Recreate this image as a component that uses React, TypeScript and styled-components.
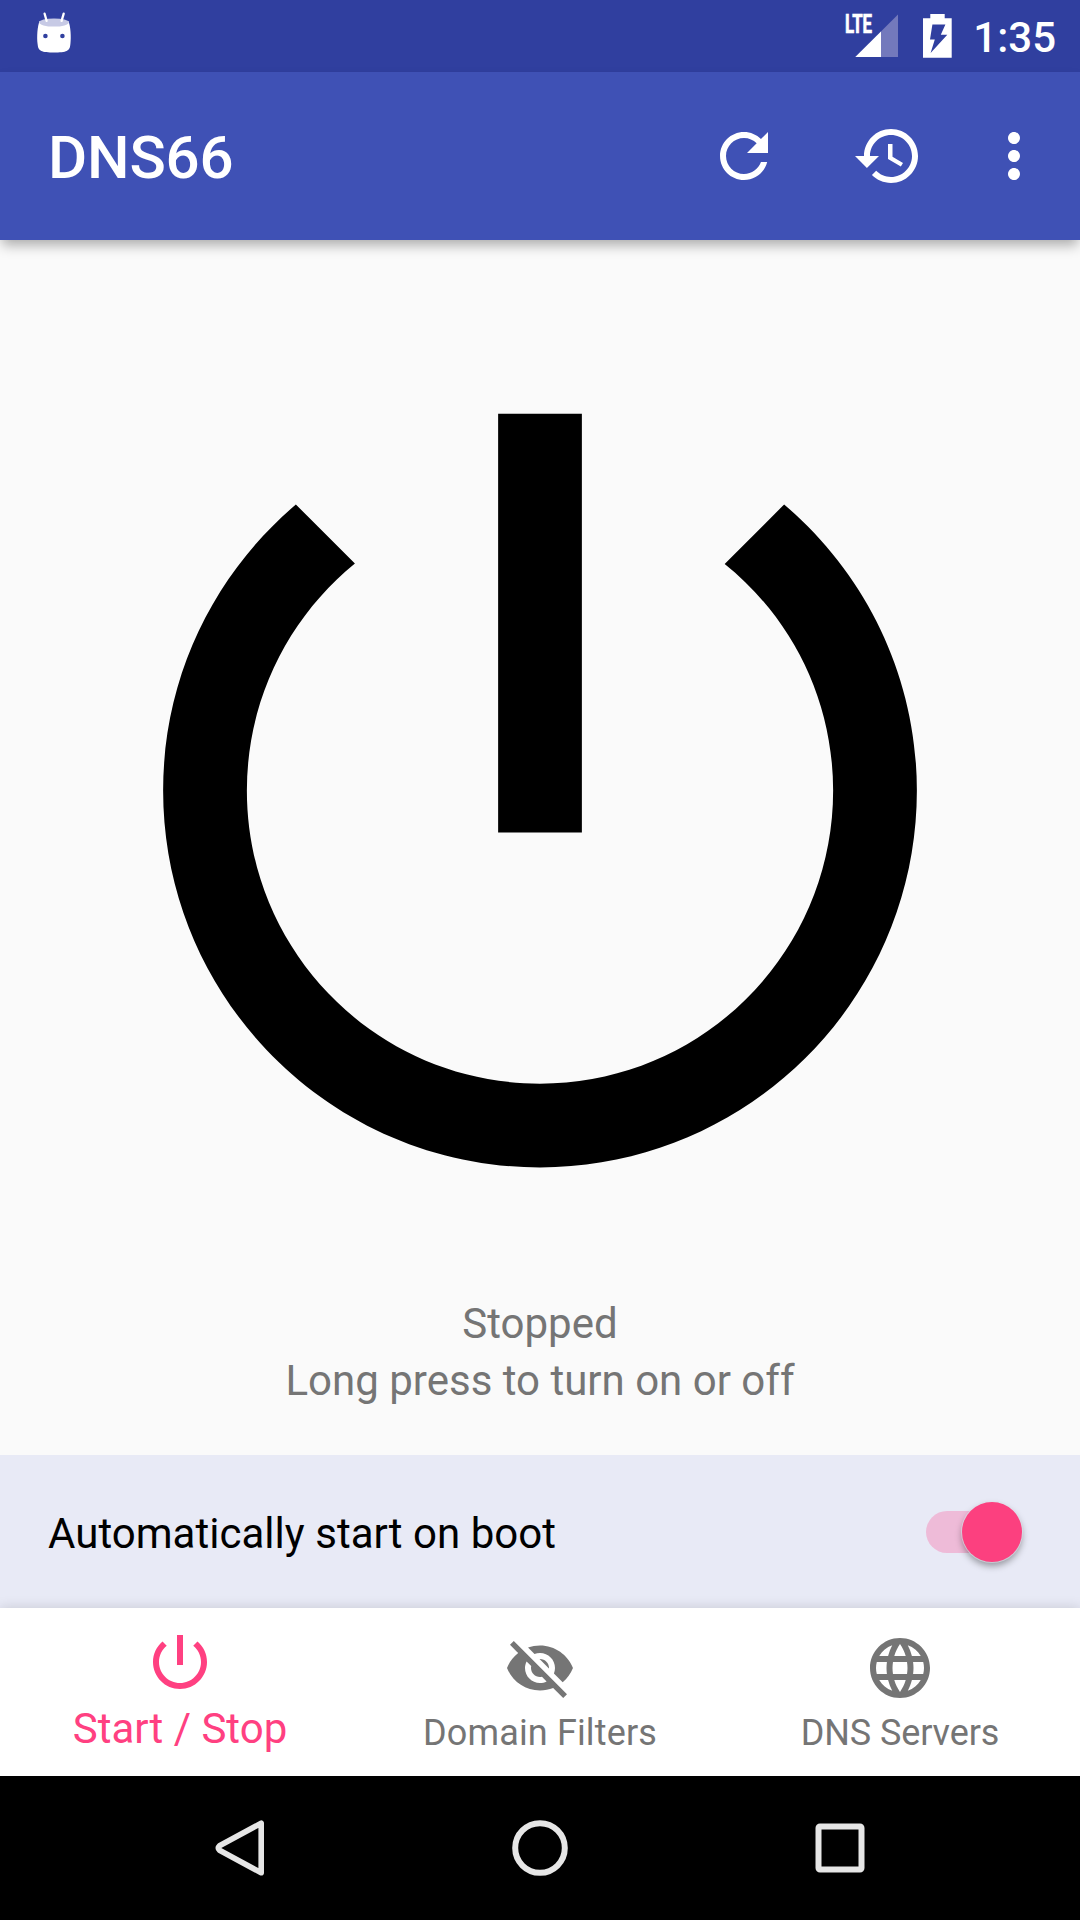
import React from "react";
import styled, { createGlobalStyle } from "styled-components";

const Global = createGlobalStyle`
  html, body { margin: 0; padding: 0; background: #fafafa; }
  * { box-sizing: border-box; }
  svg { display: block; flex: none; }
`;

const Screen = styled.div`
  width: 1080px;
  height: 1920px;
  display: flex;
  flex-direction: column;
  overflow: hidden;
  background: #fafafa;
  font-family: Roboto, "Noto Sans", sans-serif;
`;

const StatusBar = styled.header`
  height: 72px;
  flex: none;
  display: flex;
  align-items: center;
  padding: 0 24px 0 36px;
  background: #303f9f;
  color: #fff;
`;

const StatusIcons = styled.div`
  margin-left: auto;
  display: flex;
  align-items: center;
`;

const Clock = styled.time`
  margin-left: 19px;
  padding-top: 4px;
  font-size: 42px;
  font-weight: 500;
  line-height: 50px;
`;

const AppBar = styled.div`
  position: relative;
  height: 168px;
  flex: none;
  display: flex;
  align-items: center;
  padding: 0 30px 0 48px;
  background: #3f51b5;
  color: #fff;
  box-shadow: 0 7px 12px -2px rgba(0, 0, 0, 0.32);
`;

const Title = styled.h1`
  margin: 0 auto 0 0;
  padding-top: 4px;
  font-size: 60px;
  line-height: 70px;
  font-weight: 500;
  letter-spacing: -0.15px;
`;

const IconButton = styled.button<{ $gap: number }>`
  margin: 0 0 0 ${(p) => p.$gap}px;
  padding: 0;
  border: 0;
  background: none;
  color: inherit;
`;

const Main = styled.main`
  flex: 1;
  display: flex;
  flex-direction: column;
  align-items: center;
  padding-top: 48px;
`;

const Status = styled.p`
  margin: 2px 0 0;
  font-size: 42px;
  line-height: 57px;
  text-align: center;
  color: #757575;
`;

const BootRow = styled.label`
  height: 153px;
  flex: none;
  display: flex;
  align-items: center;
  justify-content: space-between;
  padding: 0 58px 0 48px;
  background: #e8eaf6;
  font-size: 42px;
  color: #000;
`;

const BootLabel = styled.span`
  padding-top: 3px;
  letter-spacing: 0.03px;
`;

const Track = styled.span`
  display: flex;
  align-items: center;
  justify-content: flex-end;
  width: 96px;
  height: 42px;
  border-radius: 21px;
  background: linear-gradient(90deg, #eebbd8 76px, transparent 76px);
`;

const Thumb = styled.span`
  flex: none;
  width: 60px;
  height: 60px;
  border-radius: 50%;
  background: #fc407f;
  box-shadow: 0 0 0 1px rgba(225, 225, 235, 0.6), 0 4px 7px rgba(0, 0, 0, 0.36);
`;

const Tabs = styled.nav`
  position: relative;
  height: 168px;
  flex: none;
  display: grid;
  grid-template-columns: repeat(3, 1fr);
  background: #fff;
  box-shadow: 0 0 12px rgba(0, 0, 0, 0.15);
`;

const Tab = styled.a<{ $active?: boolean }>`
  display: flex;
  flex-direction: column;
  align-items: center;
  padding-top: ${(p) => (p.$active ? 18 : 24)}px;
  color: ${(p) => (p.$active ? "#ff4081" : "#757575")};
  font-size: ${(p) => (p.$active ? 42 : 36)}px;
  line-height: ${(p) => (p.$active ? 50 : 42)}px;
`;

const TabLabel = styled.span<{ $gap: number; $tracking: number }>`
  margin-top: ${(p) => p.$gap}px;
  letter-spacing: ${(p) => p.$tracking}px;
`;

const SystemNav = styled.footer`
  position: relative;
  height: 144px;
  flex: none;
  display: flex;
  align-items: center;
  justify-content: center;
  gap: 228px;
  background: #000;
  color: #e6e6e6;
`;

const Icon = ({ d, size = 72, width = size }: { d: string; size?: number; width?: number }) => (
  <svg width={width} height={size} viewBox="0 0 24 24" fill="currentColor">
    <path d={d} />
  </svg>
);

const POWER =
  "M13 3h-2v10h2V3zm4.83 2.17l-1.42 1.42C17.99 7.86 19 9.81 19 12c0 3.87-3.13 7-7 7s-7-3.13-7-7c0-2.19 1.01-4.14 2.58-5.42L6.17 5.17C4.23 6.82 3 9.26 3 12c0 4.97 4.03 9 9 9s9-4.03 9-9c0-2.74-1.23-5.18-3.17-6.83z";
const REFRESH =
  "M17.65 6.35C16.2 4.9 14.21 4 12 4c-4.42 0-7.99 3.58-7.99 8s3.57 8 7.99 8c3.73 0 6.84-2.55 7.73-6h-2.08c-.82 2.33-3.04 4-5.65 4-3.31 0-6-2.69-6-6s2.69-6 6-6c1.66 0 3.14.69 4.22 1.78L13 11h7V4l-2.35 2.35z";
const HISTORY =
  "M13 3c-4.97 0-9 4.03-9 9H1l3.89 3.89.07.14L9 12H6c0-3.87 3.13-7 7-7s7 3.13 7 7-3.13 7-7 7c-1.93 0-3.68-.79-4.94-2.06l-1.42 1.42C8.27 19.99 10.51 21 13 21c4.97 0 9-4.03 9-9s-4.03-9-9-9zm-1 5v5l4.28 2.54.72-1.21-3.5-2.08V8H12z";
const MORE =
  "M12 8c1.1 0 2-.9 2-2s-.9-2-2-2-2 .9-2 2 .9 2 2 2zm0 2c-1.1 0-2 .9-2 2s.9 2 2 2 2-.9 2-2-.9-2-2-2zm0 6c-1.1 0-2 .9-2 2s.9 2 2 2 2-.9 2-2-.9-2-2-2z";
const EYE_OFF =
  "M12 7c2.76 0 5 2.24 5 5 0 .65-.13 1.26-.36 1.83l2.92 2.92c1.51-1.26 2.7-2.89 3.43-4.75-1.73-4.39-6-7.5-11-7.5-1.4 0-2.74.25-3.98.7l2.16 2.16C10.74 7.13 11.35 7 12 7zM2 4.27l2.28 2.28.46.46C3.08 8.3 1.78 10.02 1 12c1.73 4.39 6 7.5 11 7.5 1.55 0 3.03-.3 4.38-.84l.42.42L19.73 22 21 20.73 3.27 3 2 4.27zM7.53 9.8l1.55 1.55c-.05.21-.08.43-.08.65 0 1.66 1.34 3 3 3 .22 0 .44-.03.65-.08l1.55 1.55c-.67.33-1.41.53-2.2.53-2.76 0-5-2.24-5-5 0-.79.2-1.53.53-2.2zm4.31-.78l3.15 3.15.02-.16c0-1.66-1.34-3-3-3l-.17.01z";
const GLOBE =
  "M11.99 2C6.47 2 2 6.48 2 12s4.47 10 9.99 10C17.52 22 22 17.52 22 12S17.52 2 11.99 2zm6.93 6h-2.95c-.32-1.25-.78-2.45-1.38-3.56 1.84.63 3.37 1.91 4.33 3.56zM12 4.04c.83 1.2 1.48 2.53 1.91 3.96h-3.82c.43-1.43 1.08-2.76 1.91-3.96zM4.26 14C4.1 13.36 4 12.69 4 12s.1-1.36.26-2h3.38c-.08.66-.14 1.32-.14 2 0 .68.06 1.34.14 2H4.26zm.82 2h2.95c.32 1.25.78 2.45 1.38 3.56-1.84-.63-3.37-1.9-4.33-3.56zm2.95-8H5.08c.96-1.66 2.49-2.93 4.33-3.56C8.81 5.55 8.35 6.75 8.03 8zM12 19.96c-.83-1.2-1.48-2.53-1.91-3.96h3.82c-.43 1.43-1.08 2.76-1.91 3.96zM14.34 14H9.66c-.09-.66-.16-1.32-.16-2 0-.68.07-1.35.16-2h4.68c.09.65.16 1.32.16 2 0 .68-.07 1.34-.16 2zm.25 5.56c.6-1.11 1.06-2.31 1.38-3.56h2.95c-.96 1.65-2.49 2.93-4.33 3.56zM16.36 14c.08-.66.14-1.32.14-2 0-.68-.06-1.34-.14-2h3.38c.16.64.26 1.31.26 2s-.1 1.36-.26 2h-3.38z";

const DroidHead = () => (
  <svg width="36" height="72" viewBox="36 0 36 72">
    <path
      d="M39.6 21C37.4 26 36.7 37 37.6 44C38 48.6 39.2 50 41.4 50.9C45 52.9 63 52.9 66.6 50.9C68.8 50 70 48.6 70.4 44C71.3 37 70.6 26 68.4 21Z"
      fill="#fff"
    />
    <ellipse cx="54" cy="22.5" rx="14.8" ry="4.1" fill="#c7cae5" />
    <path d="M44.6 13.7L46.6 20.8M63.7 13.7L61.6 20.8" stroke="#fff" strokeWidth="2.3" strokeLinecap="round" />
    <circle cx="45.4" cy="36" r="2.3" fill="#303f9f" />
    <circle cx="62.4" cy="36" r="2.3" fill="#303f9f" />
  </svg>
);

const Signal = () => (
  <svg width="56" height="72" viewBox="844 0 56 72">
    <path d="M898 14.5V57H855.3Z" fill="#7379bc" />
    <path d="M881 31.5V57H855.3Z" fill="#fff" />
    <text
      x="844.9"
      y="33.3"
      fill="#fff"
      stroke="#fff"
      strokeWidth="0.7"
      fontSize="25"
      fontWeight="700"
      textLength="27.2"
      lengthAdjust="spacingAndGlyphs"
    >
      LTE
    </text>
  </svg>
);

const Battery = () => (
  <svg width="54" height="72" viewBox="900 0 54 72">
    <path
      fillRule="evenodd"
      fill="#fff"
      d="M930.3 14H944.7V18.3H951.7V57.8H923V18.3H930.3ZM932.4 24.6L930 39.6H934.8L930.6 53L947.3 34.8H940.8L945.4 24.6Z"
    />
  </svg>
);

const tabs = [
  { label: "Start / Stop", icon: POWER, active: true, gap: 6, tracking: 0 },
  { label: "Domain Filters", icon: EYE_OFF, active: false, gap: 8, tracking: 0.15 },
  { label: "DNS Servers", icon: GLOBE, active: false, gap: 8, tracking: -0.1 },
];

export default function App() {
  return (
    <Screen>
      <Global />
      <StatusBar>
        <DroidHead />
        <StatusIcons>
          <Signal />
          <Battery />
          <Clock>1:35</Clock>
        </StatusIcons>
      </StatusBar>
      <AppBar>
        <Title>DNS66</Title>
        <IconButton $gap={0} aria-label="Refresh"><Icon d={REFRESH} /></IconButton>
        <IconButton $gap={72} aria-label="History"><Icon d={HISTORY} /></IconButton>
        <IconButton $gap={54} aria-label="More"><Icon d={MORE} /></IconButton>
      </AppBar>
      <Main>
        <Icon d={POWER} size={1005} width={1006} />
        <Status>
          Stopped
          <br />
          Long press to turn on or off
        </Status>
      </Main>
      <BootRow>
        <BootLabel>Automatically start on boot</BootLabel>
        <Track><Thumb /></Track>
      </BootRow>
      <Tabs>
        {tabs.map((t) => (
          <Tab key={t.label} $active={t.active}>
            <Icon d={t.icon} />
            <TabLabel $gap={t.gap} $tracking={t.tracking}>{t.label}</TabLabel>
          </Tab>
        ))}
      </Tabs>
      <SystemNav>
        <svg width="72" height="72" viewBox="204 1812 72 72" fill="none" stroke="currentColor" strokeWidth="5.6" strokeLinejoin="round">
          <path d="M261.2 1823.2V1872.8L219.5 1850.3Q217 1848 219.5 1845.7Z" />
        </svg>
        <svg width="72" height="72" viewBox="0 0 72 72" fill="none" stroke="currentColor" strokeWidth="6">
          <circle cx="36" cy="36" r="24.8" />
        </svg>
        <svg width="72" height="72" viewBox="0 0 72 72" fill="none" stroke="currentColor" strokeWidth="6">
          <rect x="14.5" y="14.5" width="43" height="43" rx="1.5" />
        </svg>
      </SystemNav>
    </Screen>
  );
}
